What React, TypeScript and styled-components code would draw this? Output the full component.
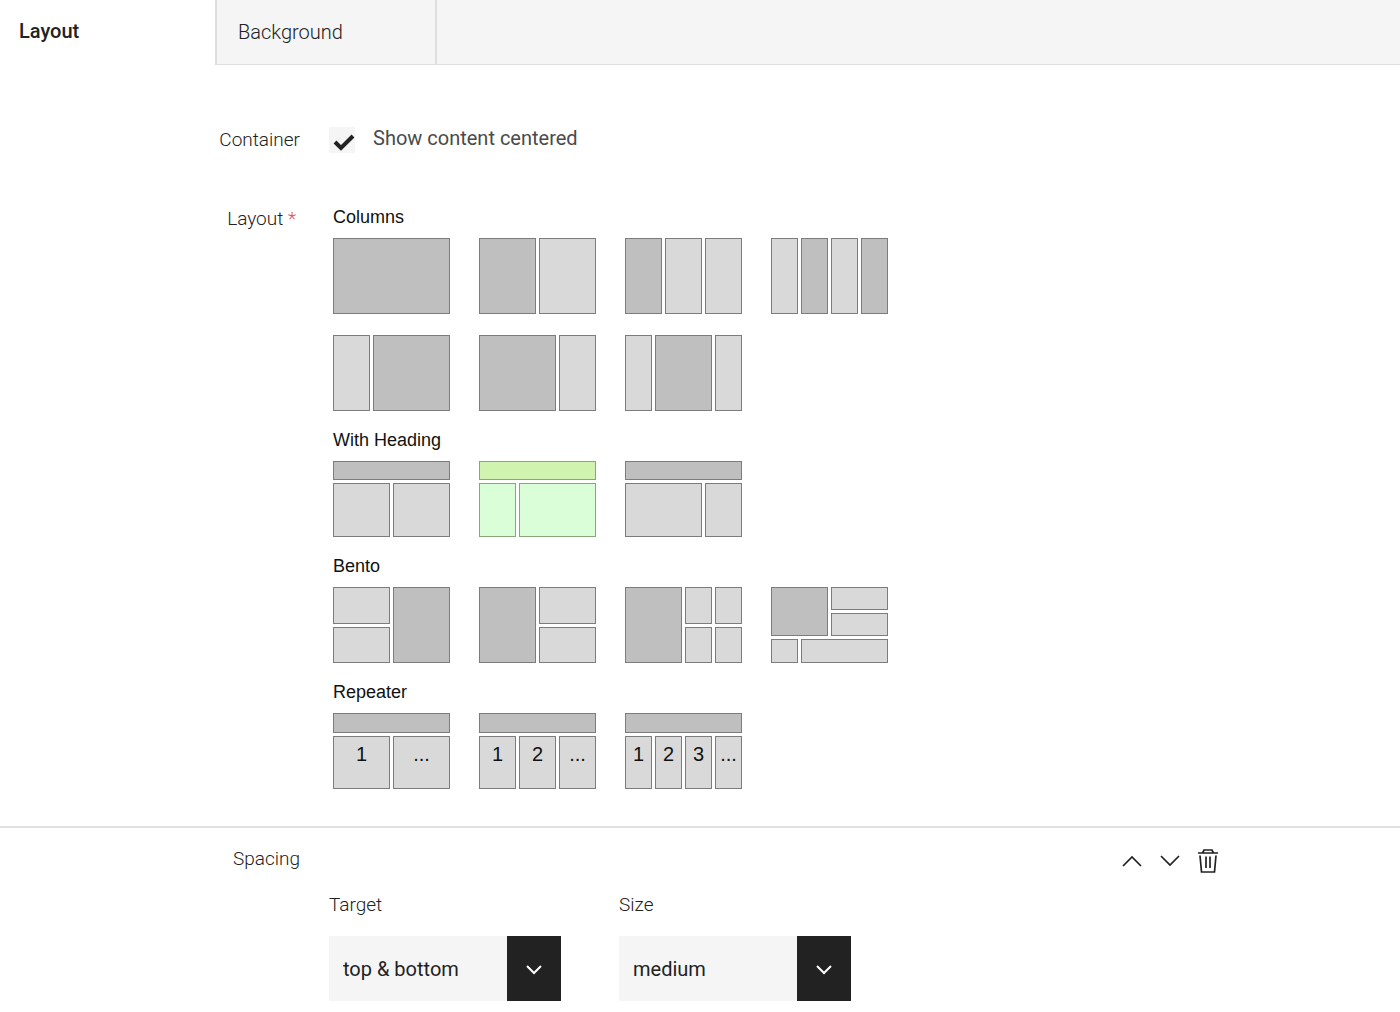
import React, { useState } from "react";
import styled, { createGlobalStyle } from "styled-components";

const GlobalStyle = createGlobalStyle`
  *, *::before, *::after { box-sizing: border-box; }
  body {
    margin: 0;
    background: #fff;
    color: #222;
    font-family: Roboto, "Liberation Sans", sans-serif;
    font-size: 19px;
    font-weight: 300;
  }
  button, select, input { font: inherit; color: inherit; }
`;

const TabBar = styled.div`
  display: flex;
  height: 65px;
  background: #dedede;
`;

const Tab = styled.button<{ $active?: boolean }>`
  width: ${(p) => (p.$active ? 215 : 221)}px;
  padding: ${(p) => (p.$active ? "0 19px 3px" : "0 21px 1px")};
  border: 0 solid #dedede;
  border-width: ${(p) => (p.$active ? "0" : "0 1px 1px 2px")};
  background: ${(p) => (p.$active ? "#fff" : "#f5f5f5")};
  color: #222;
  font-size: 20px;
  font-weight: ${(p) => (p.$active ? 500 : 300)};
  text-align: left;
  cursor: pointer;
`;

const TabFiller = styled.div`
  flex: 1;
  border: 0 solid #dedede;
  border-width: 0 0 1px 1px;
  background: #f5f5f5;
`;

const FormRow = styled.div`
  display: grid;
  grid-template-columns: 300px 1fr;
  column-gap: 29px;
`;

const ContainerRow = styled(FormRow)`
  padding-top: 59px;
  align-items: center;
`;

const LayoutRow = styled(FormRow)`
  padding: 51px 0 37px;
`;

const RowLabel = styled.div`
  text-align: right;
  line-height: 24px;
`;

const RequiredLabel = styled(RowLabel)`
  padding-right: 4px;
`;

const Required = styled.span`
  color: #e0524a;
`;

const CheckLabel = styled.label`
  display: flex;
  align-items: center;
  gap: 18px;
  font-size: 20px;
  font-weight: 400;
  line-height: 28px;
  color: #4a4a4a;
  cursor: pointer;
`;

const CheckText = styled.span`
  padding-bottom: 4px;
`;

const CheckBox = styled.span`
  display: grid;
  width: 26px;
  height: 26px;
  background: #f5f5f5;

  input, svg { grid-area: 1 / 1; }
  input {
    appearance: none;
    width: 100%;
    height: 100%;
    margin: 0;
    cursor: pointer;
  }
  svg { pointer-events: none; visibility: hidden; }
  input:checked + svg { visibility: visible; }
`;

const Groups = styled.div`
  display: flex;
  flex-direction: column;
  gap: 19px;
  padding-left: 4px;
`;

const GroupTitle = styled.h3`
  margin: 0;
  padding-bottom: 10px;
  font-family: "Liberation Sans", Arial, sans-serif;
  font-size: 18px;
  font-weight: 400;
  line-height: 21px;
  color: #111;
`;

const TileGrid = styled.div`
  display: grid;
  grid-template-columns: repeat(4, 117px);
  gap: 21px 29px;
`;

const Tile = styled.label<{ $rows: string }>`
  position: relative;
  display: grid;
  grid-template-columns: repeat(12, 1fr);
  grid-template-rows: ${(p) => p.$rows};
  gap: 3px;
  height: 76px;
  cursor: pointer;
`;

const TileInput = styled.input`
  position: absolute;
  inset: 0;
  width: 100%;
  height: 100%;
  margin: 0;
  opacity: 0;
  cursor: pointer;
`;

const cellColor = (dark?: boolean, selected?: boolean) => {
  if (selected) return dark ? "#d0f4b0" : "#daffd8";
  return dark ? "#bfbfbf" : "#d9d9d9";
};

const Cell = styled.span<{
  $span: number;
  $rowSpan?: number;
  $dark?: boolean;
  $selected?: boolean;
}>`
  grid-column: span ${(p) => p.$span};
  grid-row: span ${(p) => p.$rowSpan ?? 1};
  min-width: 0;
  border: 1px solid ${(p) => (p.$selected ? "#8ba57b" : "#7c7c7c")};
  background: ${(p) => cellColor(p.$dark, p.$selected)};
  font-family: "Liberation Sans", Arial, sans-serif;
  font-size: 20px;
  font-weight: 400;
  line-height: 34px;
  text-align: center;
  color: #111;
`;

const Section = styled.section`
  border-top: 2px solid #e0e0e0;
`;

const SpacingRow = styled(FormRow)`
  padding: 19px 180px 0 0;
`;

const Actions = styled.div`
  display: flex;
  justify-content: flex-end;
  gap: 12px;
  height: 28px;
`;

const IconButton = styled.button`
  display: grid;
  place-items: center;
  width: 26px;
  height: 28px;
  padding: 0;
  border: 0;
  background: none;
  cursor: pointer;
`;

const Fields = styled.div`
  grid-column: 2;
  display: flex;
  gap: 58px;
  padding-top: 17px;
`;

const Field = styled.label`
  display: flex;
  flex-direction: column;
  gap: 18px;
  width: 232px;
  line-height: 26px;
`;

const SelectBox = styled.span`
  display: grid;
  grid-template-columns: 1fr 54px;
  height: 65px;
  background: #f5f5f5;
`;

const Select = styled.select`
  grid-area: 1 / 1 / 2 / 3;
  appearance: none;
  padding: 0 14px;
  border: 0;
  border-radius: 0;
  background: none;
  font-size: 20px;
  font-weight: 400;
  color: #222;
`;

const Caret = styled.span`
  grid-area: 1 / 2;
  display: grid;
  place-items: center;
  background: #222;
  pointer-events: none;
`;

type CellSpec = { span: number; rowSpan?: number; dark?: boolean; text?: string };
type TileSpec = { id: string; rows: string; cells: CellSpec[] };

const light = (span: number, text?: string): CellSpec => ({ span, text });
const dark = (span: number, rowSpan = 1): CellSpec => ({ span, rowSpan, dark: true });

const groups: { title: string; tiles: TileSpec[] }[] = [
  {
    title: "Columns",
    tiles: [
      { id: "One column", rows: "1fr", cells: [dark(12)] },
      { id: "Two columns", rows: "1fr", cells: [dark(6), light(6)] },
      { id: "Three columns", rows: "1fr", cells: [dark(4), light(4), light(4)] },
      { id: "Four columns", rows: "1fr", cells: [light(3), dark(3), light(3), dark(3)] },
      { id: "Narrow and wide", rows: "1fr", cells: [light(4), dark(8)] },
      { id: "Wide and narrow", rows: "1fr", cells: [dark(8), light(4)] },
      { id: "Wide centre", rows: "1fr", cells: [light(3), dark(6), light(3)] },
    ],
  },
  {
    title: "With Heading",
    tiles: [
      { id: "Heading, two columns", rows: "19px 1fr", cells: [dark(12), light(6), light(6)] },
      { id: "Heading, narrow and wide", rows: "19px 1fr", cells: [dark(12), light(4), light(8)] },
      { id: "Heading, wide and narrow", rows: "19px 1fr", cells: [dark(12), light(8), light(4)] },
    ],
  },
  {
    title: "Bento",
    tiles: [
      { id: "Bento right", rows: "37px 1fr", cells: [light(6), dark(6, 2), light(6)] },
      { id: "Bento left", rows: "37px 1fr", cells: [dark(6, 2), light(6), light(6)] },
      {
        id: "Bento four",
        rows: "37px 1fr",
        cells: [dark(6, 2), light(3), light(3), light(3), light(3)],
      },
      {
        id: "Bento mixed",
        rows: "23px 23px 1fr",
        cells: [dark(6, 2), light(6), light(6), light(3), light(9)],
      },
    ],
  },
  {
    title: "Repeater",
    tiles: [
      { id: "Repeat two", rows: "20px 1fr", cells: [dark(12), light(6, "1"), light(6, "...")] },
      {
        id: "Repeat three",
        rows: "20px 1fr",
        cells: [dark(12), light(4, "1"), light(4, "2"), light(4, "...")],
      },
      {
        id: "Repeat four",
        rows: "20px 1fr",
        cells: [dark(12), light(3, "1"), light(3, "2"), light(3, "3"), light(3, "...")],
      },
    ],
  },
];

function SelectField({ label, options }: { label: string; options: string[] }) {
  return (
    <Field>
      {label}
      <SelectBox>
        <Select defaultValue={options[0]}>
          {options.map((o) => (
            <option key={o}>{o}</option>
          ))}
        </Select>
        <Caret>
          <svg width="18" height="12" viewBox="0 0 18 12" fill="none" stroke="#fff" strokeWidth="2">
            <path d="M2 3l7 7 7-7" />
          </svg>
        </Caret>
      </SelectBox>
    </Field>
  );
}

export default function App() {
  const [selected, setSelected] = useState("Heading, narrow and wide");
  return (
    <>
      <GlobalStyle />
      <TabBar role="tablist">
        <Tab $active role="tab" aria-selected>
          Layout
        </Tab>
        <Tab role="tab" aria-selected={false}>
          Background
        </Tab>
        <TabFiller />
      </TabBar>

      <ContainerRow>
        <RowLabel>Container</RowLabel>
        <CheckLabel>
          <CheckBox>
            <input type="checkbox" defaultChecked />
            <svg width="26" height="26" viewBox="0 0 26 26" fill="none" stroke="#222" strokeWidth="4">
              <path d="M6 15l6 6L24 9" />
            </svg>
          </CheckBox>
          <CheckText>Show content centered</CheckText>
        </CheckLabel>
      </ContainerRow>

      <LayoutRow>
        <RequiredLabel id="layout-label">
          Layout <Required>*</Required>
        </RequiredLabel>
        <Groups role="radiogroup" aria-labelledby="layout-label">
          {groups.map((group) => (
            <div key={group.title}>
              <GroupTitle>{group.title}</GroupTitle>
              <TileGrid>
                {group.tiles.map((tile) => (
                  <Tile key={tile.id} $rows={tile.rows}>
                    {tile.cells.map((c, i) => (
                      <Cell
                        key={i}
                        $span={c.span}
                        $rowSpan={c.rowSpan}
                        $dark={c.dark}
                        $selected={selected === tile.id}
                      >
                        {c.text}
                      </Cell>
                    ))}
                    <TileInput
                      type="radio"
                      name="layout"
                      aria-label={tile.id}
                      checked={selected === tile.id}
                      onChange={() => setSelected(tile.id)}
                    />
                  </Tile>
                ))}
              </TileGrid>
            </div>
          ))}
        </Groups>
      </LayoutRow>

      <Section>
        <SpacingRow>
          <RowLabel>Spacing</RowLabel>
          <Actions>
            <IconButton aria-label="Move up">
              <svg width="22" height="12" viewBox="0 0 22 12" fill="none" stroke="#222" strokeWidth="1.700">
                <path d="M3 11l9-9 9 9" />
              </svg>
            </IconButton>
            <IconButton aria-label="Move down">
              <svg width="22" height="12" viewBox="0 0 22 12" fill="none" stroke="#222" strokeWidth="1.700">
                <path d="M3 1l9 9 9-9" />
              </svg>
            </IconButton>
            <IconButton aria-label="Delete">
              <svg width="24" height="26" viewBox="0 0 24 26" fill="none" stroke="#222" strokeWidth="1.700">
                <path d="M3 5h20M7.500 5l1.500-3h8l1.500 3M5 7.500l1.500 16.500h13L21 7.500M11 8.500v11.500M15 8.500v11.500" />
              </svg>
            </IconButton>
          </Actions>
          <Fields>
            <SelectField label="Target" options={["top & bottom", "top", "bottom"]} />
            <SelectField label="Size" options={["medium", "small", "large"]} />
          </Fields>
        </SpacingRow>
      </Section>
    </>
  );
}
